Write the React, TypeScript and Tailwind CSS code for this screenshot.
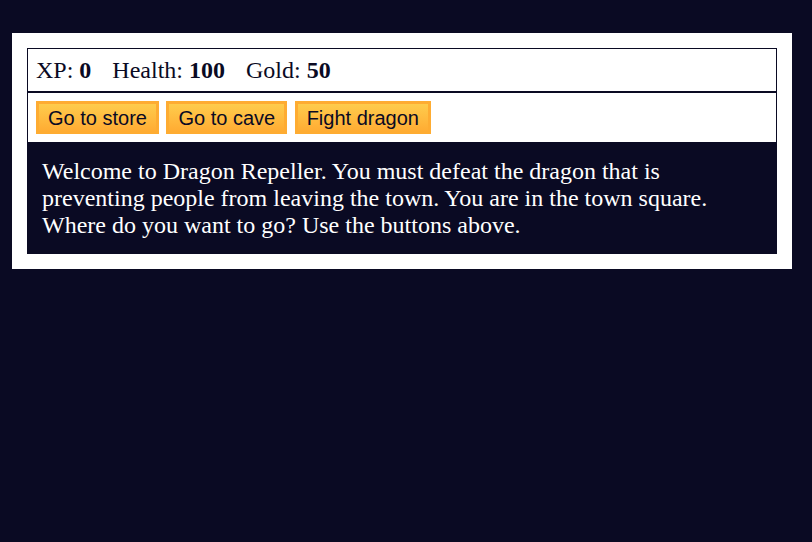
const App: React.FC = () => {
  const stats = [
    { label: 'XP', value: 0 },
    { label: 'Health', value: 100 },
    { label: 'Gold', value: 50 },
  ];
  const buttons = ['Go to store', 'Go to cave', 'Fight dragon'];

  return (
    <div className="min-h-screen bg-[#0a0a23] pl-3 pr-5 pt-[33px]">
      <div className="bg-white p-[15px] font-['Liberation_Serif',serif]">
        <div className="flex border border-[#0a0a23] px-2 py-2 text-[24px] leading-[26px] text-[#0a0a23]">
          {stats.map((s) => (
            <span key={s.label} className="pr-[21px]">
              {s.label}: <strong>{s.value}</strong>
            </span>
          ))}
        </div>
        <div className="flex gap-[7.5px] border border-[#0a0a23] p-2">
          {buttons.map((b) => (
            <button
              key={b}
              className="h-[33px] cursor-pointer border-[3px] border-[#feac32] bg-gradient-to-b from-[#fecc4c] to-[#ffac33] px-[9px] font-['Liberation_Sans',sans-serif] text-[20px] leading-none text-[#0a0a23]"
            >
              {b}
            </button>
          ))}
        </div>
        <div className="bg-[#0a0a23] p-[15px] text-[24px] leading-[27px] text-white">
          Welcome to Dragon Repeller. You must defeat the dragon that is preventing people from leaving the town. You are in
          the town square. Where do you want to go? Use the buttons above.
        </div>
      </div>
    </div>
  );
};

export default App;
